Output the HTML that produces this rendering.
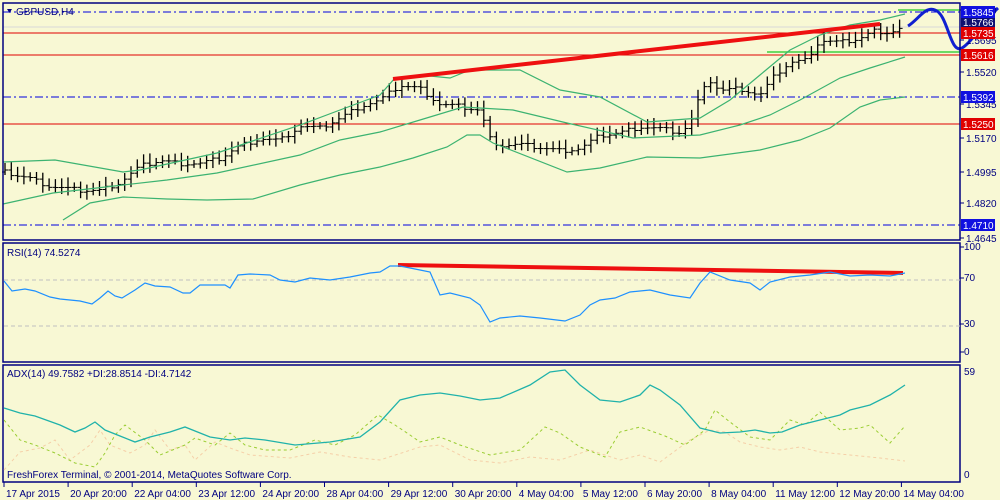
<!DOCTYPE html>
<html><head><meta charset="utf-8"><style>
html,body{margin:0;padding:0;background:#f8f8d4;width:1000px;height:500px;overflow:hidden}
svg text{font-family:"Liberation Sans",sans-serif;font-size:10px;fill:#000080}
</style></head><body>
<svg id="s" width="1000" height="500" xmlns="http://www.w3.org/2000/svg">
<rect width="1000" height="500" fill="#f8f8d4"/>
<line x1="3" y1="12" x2="960" y2="12" stroke="#0000e0" stroke-dasharray="8,3,2,3" stroke-width="1"/>
<line x1="3" y1="27" x2="960" y2="27" stroke="#d8d8d8"/>
<line x1="3" y1="33" x2="960" y2="33" stroke="#e00000"/>
<line x1="3" y1="55" x2="960" y2="55" stroke="#e00000"/>
<line x1="3" y1="97" x2="960" y2="97" stroke="#0000e0" stroke-dasharray="8,3,2,3"/>
<line x1="3" y1="124" x2="960" y2="124" stroke="#e00000"/>
<line x1="3" y1="225" x2="960" y2="225" stroke="#0000e0" stroke-dasharray="8,3,2,3"/>
<line x1="767" y1="52" x2="960" y2="52" stroke="#40d040" stroke-width="1.5"/>
<line x1="898" y1="10" x2="960" y2="10" stroke="#40d040" stroke-width="1.5"/>
<g id="g"></g>
<line x1="393" y1="79" x2="880" y2="24" stroke="#ee1010" stroke-width="4"/>
<line x1="398" y1="265" x2="903" y2="273" stroke="#ee1010" stroke-width="4"/>
<path d="M908,26 C918,20 925,6 935,10 C948,14 950,55 962,48 C972,42 985,20 998,8" fill="none" stroke="#1020d0" stroke-width="3"/>
<g fill="none" stroke="#000080" stroke-width="1.5">
<rect x="3" y="3" width="957" height="237"/>
<rect x="3" y="243" width="957" height="119"/>
<rect x="3" y="365" width="957" height="117"/>
</g>
<text x="16" y="15">GBPUSD,H4</text>
<path d="M7,9 L12,9 L9.5,13Z" fill="#000080"/>
<text x="7" y="256">RSI(14) 74.5274</text>
<text x="7" y="377">ADX(14) 49.7582 +DI:28.8514 -DI:4.7142</text>
<text x="7" y="478">FreshForex Terminal, © 2001-2014, MetaQuotes Software Corp.</text>
<line x1="4" y1="280" x2="960" y2="280" stroke="#c0c0c0" stroke-dasharray="4,3"/>
<line x1="4" y1="326" x2="960" y2="326" stroke="#c0c0c0" stroke-dasharray="4,3"/>
<g id="ax"></g>
</svg>
<script>
var g=document.getElementById('g'),ax=document.getElementById('ax'),NS='http://www.w3.org/2000/svg';
function el(p,t,a){var e=document.createElementNS(NS,t);for(var k in a)e.setAttribute(k,a[k]);p.appendChild(e);return e;}
function interp(pts,x){for(var i=0;i<pts.length-1;i++){if(x>=pts[i][0]&&x<=pts[i+1][0]){var f=(x-pts[i][0])/(pts[i+1][0]-pts[i][0]);return pts[i][1]+f*(pts[i+1][1]-pts[i][1]);}}return pts[pts.length-1][1];}
function poly(p,pts,st,w,da){var d=pts.map(function(q,i){return (i?'L':'M')+q[0]+','+q[1]}).join('');var a={d:d,fill:'none',stroke:st,'stroke-width':w};if(da)a['stroke-dasharray']=da;el(p,'path',a);}
var price=[[5,172],[30,178],[50,186],[80,190],[100,190],[120,182],[140,166],[160,160],[180,163],[200,163],[220,158],[240,145],[260,138],[280,140],[300,126],[320,128],[340,118],[360,106],[380,100],[400,85],[420,88],[440,104],[460,106],[480,110],[490,138],[500,145],[520,144],[560,150],[580,148],[600,135],[620,132],[640,126],[660,128],[680,132],[690,124],[700,95],[710,80],[720,90],[740,88],[760,95],[775,75],[790,62],[805,60],[820,40],[840,42],[860,38],[875,30],[890,32],[905,26]];
var prev=interp(price,5);
for(var x=5;x<=905;x+=6.3){var c=interp(price,x)+((x*7)%5-2);var hi=Math.min(prev,c)-4-((x*3)%6),lo=Math.max(prev,c)+3+((x*5)%5);
el(g,'line',{x1:x,y1:hi,x2:x,y2:lo,stroke:'#000','stroke-width':1.3});
el(g,'line',{x1:x-3,y1:prev,x2:x,y2:prev,stroke:'#000','stroke-width':1});
el(g,'line',{x1:x,y1:c,x2:x+3,y2:c,stroke:'#000','stroke-width':1});prev=c;}
var up=[[3,162],[55,160],[123,172],[140,170],[217,153],[300,125],[340,110],[380,95],[395,78],[420,75],[450,78],[470,70],[520,70],[560,90],[600,97],[647,122],[700,118],[730,100],[760,75],[790,50],[820,35],[850,25],[880,20],[905,14]];
var mid=[[3,204],[53,193],[123,185],[167,180],[217,173],[300,155],[340,140],[380,132],[420,120],[463,107],[513,110],[567,123],[633,138],[700,135],[740,125],[770,115],[800,100],[840,78],[870,68],[905,57]];
var lo=[[63,220],[90,203],[123,197],[167,199],[207,200],[253,199],[300,185],[340,175],[380,167],[413,158],[447,147],[467,135],[480,135],[493,143],[567,172],[600,168],[647,157],[700,158],[760,150],[800,140],[830,128],[860,107],[880,100],[905,97]];
poly(g,up,'#3cb371',1.2);poly(g,mid,'#3cb371',1.2);poly(g,lo,'#3cb371',1.2);
var pl=[[1.5870,10],[1.5695,40],[1.5520,72],[1.5345,104],[1.5170,138],[1.4995,172],[1.4820,203],[1.4645,238]];
pl.forEach(function(p){el(ax,'line',{x1:960,y1:p[1],x2:964,y2:p[1],stroke:'#000080'});var t=el(ax,'text',{x:966,y:p[1]+4});t.textContent=p[0].toFixed(4);});
function tag(y,v,col){el(ax,'rect',{x:961,y:y-6,width:34,height:12,fill:col});var t=el(ax,'text',{x:963,y:y+4,style:'fill:#fff'});t.textContent=v;}
tag(22,'1.5766','#101070');tag(12,'1.5845','#1010e0');tag(33,'1.5735','#e00000');tag(55,'1.5616','#e00000');tag(97,'1.5392','#1010e0');tag(124,'1.5250','#e00000');tag(225,'1.4710','#1010e0');
[[100,250],[70,281],[30,327],[0,355]].forEach(function(p){el(ax,'line',{x1:960,y1:p[1]-3,x2:964,y2:p[1]-3,stroke:'#000080'});var t=el(ax,'text',{x:964,y:p[1]});t.textContent=p[0];});
[[59,375],[0,478]].forEach(function(p){var t=el(ax,'text',{x:964,y:p[1]});t.textContent=p[0];});
var rsi=[[4,281],[12,291],[25,289],[35,291],[50,297],[60,299],[80,301],[92,304],[100,298],[108,291],[115,296],[122,298],[135,290],[145,283],[155,286],[170,287],[183,293],[190,293],[200,285],[225,285],[230,288],[238,275],[250,274],[270,275],[280,280],[295,282],[310,278],[330,280],[350,277],[370,273],[380,272],[390,266],[400,266],[420,270],[430,272],[440,295],[450,293],[470,298],[480,305],[490,322],[500,318],[520,316],[540,318],[565,321],[580,315],[590,305],[600,300],[615,298],[630,292],[650,290],[670,295],[690,298],[700,283],[710,272],[730,280],[750,283],[760,290],[770,282],[790,277],[810,275],[830,272],[850,276],[870,275],[890,276],[905,273]];
poly(ax,rsi,'#1e90ff',1.2);
var adx=[[4,408],[20,413],[35,416],[60,425],[75,432],[85,428],[95,422],[105,430],[120,436],[135,442],[150,437],[170,432],[185,427],[210,437],[230,440],[245,438],[265,440],[295,445],[330,442],[360,437],[380,422],[400,400],[420,395],[440,393],[460,396],[480,400],[500,398],[530,385],[550,372],[565,370],[580,385],[600,400],[620,402],[640,395],[650,385],[660,390],[680,405],[700,428],[720,433],[740,432],[755,430],[770,433],[782,432],[800,425],[820,420],[840,415],[850,410],[870,405],[890,395],[905,385]];
var pdi=[[4,420],[20,440],[35,445],[55,453],[75,463],[95,467],[105,453],[115,435],[125,425],[145,440],[160,455],[185,445],[195,438],[215,445],[230,433],[245,445],[265,450],[290,450],[315,440],[335,445],[355,435],[378,415],[395,425],[410,435],[420,442],[440,437],[460,445],[490,455],[520,450],[545,427],[560,433],[580,447],[605,457],[620,432],[640,427],[665,436],[685,445],[705,430],[715,410],[730,422],[750,437],[770,440],[790,420],[805,425],[820,412],[840,430],[860,428],[870,425],[890,443],[905,426]];
var mdi=[[4,470],[20,452],[40,448],[55,440],[70,460],[90,445],[100,430],[110,445],[130,453],[145,445],[155,430],[170,450],[185,445],[195,460],[215,442],[230,448],[250,455],[290,458],[320,452],[350,457],[380,460],[420,447],[440,445],[470,460],[500,463],[530,457],[560,460],[590,450],[620,460],[640,455],[660,462],[690,440],[710,430],[725,432],[740,442],[760,447],[780,450],[800,447],[820,452],[850,455],[880,458],[905,461]];
poly(ax,mdi,'#f5cfa8',1,'3,3');poly(ax,pdi,'#9acd32',1,'3,3');poly(ax,adx,'#20b2aa',1.3);
var tl=['17 Apr 2015','20 Apr 20:00','22 Apr 04:00','23 Apr 12:00','24 Apr 20:00','28 Apr 04:00','29 Apr 12:00','30 Apr 20:00','4 May 04:00','5 May 12:00','6 May 20:00','8 May 04:00','11 May 12:00','12 May 20:00','14 May 04:00'];
tl.forEach(function(s,i){var x=4+i*64.1;el(ax,'line',{x1:x,y1:482,x2:x,y2:487,stroke:'#000080'});var t=el(ax,'text',{x:x+2,y:497});t.textContent=s;});
</script>
</body></html>
